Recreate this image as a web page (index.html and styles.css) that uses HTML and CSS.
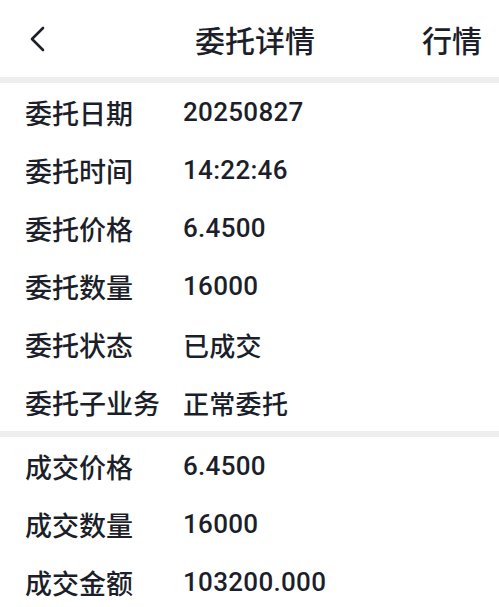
FILE: index.html
```html
<!DOCTYPE html>
<html lang="zh-CN">
<head>
<meta charset="utf-8">
<title>委托详情</title>
<link rel="stylesheet" href="styles.css">
</head>
<body>
<div class="page">
  <header class="nav">
    <span class="back">
      <svg width="18" height="26" viewBox="0 0 18 26"><path d="M15 2 L4 13 L15 24" fill="none" stroke="#1c1f2a" stroke-width="2.6" stroke-linecap="round" stroke-linejoin="round"/></svg>
    </span>
    <span class="title">委托详情</span>
    <span class="action">行情</span>
  </header>
  <div class="sep"></div>
  <section class="list">
    <div class="row"><span class="label">委托日期</span><span class="value">20250827</span></div>
    <div class="row"><span class="label">委托时间</span><span class="value">14:22:46</span></div>
    <div class="row"><span class="label">委托价格</span><span class="value">6.4500</span></div>
    <div class="row"><span class="label">委托数量</span><span class="value">16000</span></div>
    <div class="row"><span class="label">委托状态</span><span class="value">已成交</span></div>
    <div class="row"><span class="label">委托子业务</span><span class="value">正常委托</span></div>
  </section>
  <div class="sep"></div>
  <section class="list">
    <div class="row"><span class="label">成交价格</span><span class="value">6.4500</span></div>
    <div class="row"><span class="label">成交数量</span><span class="value">16000</span></div>
    <div class="row"><span class="label">成交金额</span><span class="value">103200.000</span></div>
  </section>
</div>
</body>
</html>
```
FILE: styles.css
```css
html, body {
  margin: 0;
  padding: 0;
  background: #ffffff;
}
body {
  font-family: "Noto Sans CJK SC", "Noto Sans", sans-serif;
  color: #1c1f2a;
  font-weight: 500;
}
.page {
  width: 499px;
  height: 607px;
  overflow: hidden;
}
.nav {
  height: 77px;
  display: grid;
  grid-template-columns: 1fr auto 1fr;
  align-items: center;
  padding: 0 17px 0 28px;
}
.back {
  display: flex;
  align-items: center;
  justify-self: start;
}
.title {
  font-size: 30px;
  line-height: 1;
}
.action {
  justify-self: end;
  font-size: 30px;
  line-height: 1;
}
.sep {
  height: 6px;
  background: #eeeeee;
}
.row {
  height: 58px;
  display: flex;
  align-items: center;
  padding-left: 25px;
  font-size: 27px;
}
.label {
  width: 158px;
  flex: none;
}
.value {
  font-family: "Roboto", "Noto Sans CJK SC", sans-serif;
  font-size: 26px;
  letter-spacing: 0.3px;
}
```
